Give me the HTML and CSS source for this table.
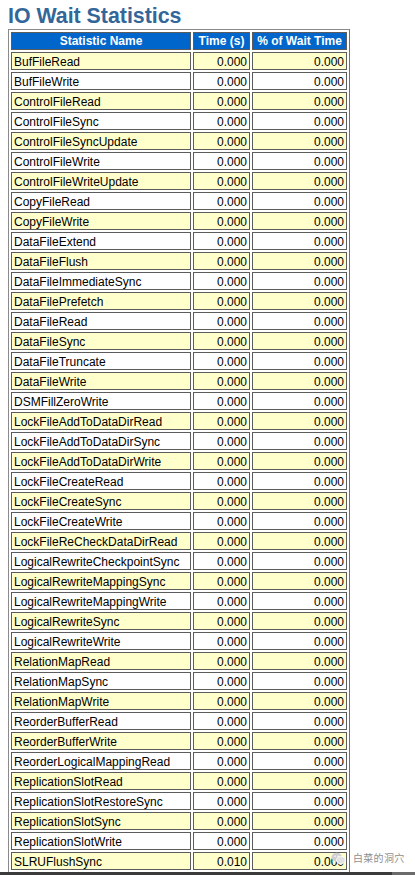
FILE: index.html
```html
<!DOCTYPE html>
<html>
<head>
<meta charset="utf-8">
<link rel="stylesheet" href="styles.css">
</head>
<body>
<h3 class="title">IO Wait Statistics</h3>
<table class="awr">
<colgroup><col class="c1"><col class="c2"><col class="c3"></colgroup>
<tr><th>Statistic Name</th><th>Time (s)</th><th>% of Wait Time</th></tr>
<tr class="y"><td>BufFileRead</td><td class="n">0.000</td><td class="n">0.000</td></tr>
<tr><td>BufFileWrite</td><td class="n">0.000</td><td class="n">0.000</td></tr>
<tr class="y"><td>ControlFileRead</td><td class="n">0.000</td><td class="n">0.000</td></tr>
<tr><td>ControlFileSync</td><td class="n">0.000</td><td class="n">0.000</td></tr>
<tr class="y"><td>ControlFileSyncUpdate</td><td class="n">0.000</td><td class="n">0.000</td></tr>
<tr><td>ControlFileWrite</td><td class="n">0.000</td><td class="n">0.000</td></tr>
<tr class="y"><td>ControlFileWriteUpdate</td><td class="n">0.000</td><td class="n">0.000</td></tr>
<tr><td>CopyFileRead</td><td class="n">0.000</td><td class="n">0.000</td></tr>
<tr class="y"><td>CopyFileWrite</td><td class="n">0.000</td><td class="n">0.000</td></tr>
<tr><td>DataFileExtend</td><td class="n">0.000</td><td class="n">0.000</td></tr>
<tr class="y"><td>DataFileFlush</td><td class="n">0.000</td><td class="n">0.000</td></tr>
<tr><td>DataFileImmediateSync</td><td class="n">0.000</td><td class="n">0.000</td></tr>
<tr class="y"><td>DataFilePrefetch</td><td class="n">0.000</td><td class="n">0.000</td></tr>
<tr><td>DataFileRead</td><td class="n">0.000</td><td class="n">0.000</td></tr>
<tr class="y"><td>DataFileSync</td><td class="n">0.000</td><td class="n">0.000</td></tr>
<tr><td>DataFileTruncate</td><td class="n">0.000</td><td class="n">0.000</td></tr>
<tr class="y"><td>DataFileWrite</td><td class="n">0.000</td><td class="n">0.000</td></tr>
<tr><td>DSMFillZeroWrite</td><td class="n">0.000</td><td class="n">0.000</td></tr>
<tr class="y"><td>LockFileAddToDataDirRead</td><td class="n">0.000</td><td class="n">0.000</td></tr>
<tr><td>LockFileAddToDataDirSync</td><td class="n">0.000</td><td class="n">0.000</td></tr>
<tr class="y"><td>LockFileAddToDataDirWrite</td><td class="n">0.000</td><td class="n">0.000</td></tr>
<tr><td>LockFileCreateRead</td><td class="n">0.000</td><td class="n">0.000</td></tr>
<tr class="y"><td>LockFileCreateSync</td><td class="n">0.000</td><td class="n">0.000</td></tr>
<tr><td>LockFileCreateWrite</td><td class="n">0.000</td><td class="n">0.000</td></tr>
<tr class="y"><td>LockFileReCheckDataDirRead</td><td class="n">0.000</td><td class="n">0.000</td></tr>
<tr><td>LogicalRewriteCheckpointSync</td><td class="n">0.000</td><td class="n">0.000</td></tr>
<tr class="y"><td>LogicalRewriteMappingSync</td><td class="n">0.000</td><td class="n">0.000</td></tr>
<tr><td>LogicalRewriteMappingWrite</td><td class="n">0.000</td><td class="n">0.000</td></tr>
<tr class="y"><td>LogicalRewriteSync</td><td class="n">0.000</td><td class="n">0.000</td></tr>
<tr><td>LogicalRewriteWrite</td><td class="n">0.000</td><td class="n">0.000</td></tr>
<tr class="y"><td>RelationMapRead</td><td class="n">0.000</td><td class="n">0.000</td></tr>
<tr><td>RelationMapSync</td><td class="n">0.000</td><td class="n">0.000</td></tr>
<tr class="y"><td>RelationMapWrite</td><td class="n">0.000</td><td class="n">0.000</td></tr>
<tr><td>ReorderBufferRead</td><td class="n">0.000</td><td class="n">0.000</td></tr>
<tr class="y"><td>ReorderBufferWrite</td><td class="n">0.000</td><td class="n">0.000</td></tr>
<tr><td>ReorderLogicalMappingRead</td><td class="n">0.000</td><td class="n">0.000</td></tr>
<tr class="y"><td>ReplicationSlotRead</td><td class="n">0.000</td><td class="n">0.000</td></tr>
<tr><td>ReplicationSlotRestoreSync</td><td class="n">0.000</td><td class="n">0.000</td></tr>
<tr class="y"><td>ReplicationSlotSync</td><td class="n">0.000</td><td class="n">0.000</td></tr>
<tr><td>ReplicationSlotWrite</td><td class="n">0.000</td><td class="n">0.000</td></tr>
<tr class="y"><td>SLRUFlushSync</td><td class="n">0.010</td><td class="n">0.000</td></tr>
</table>
<div class="watermark">
<svg class="wm-icon" width="15" height="13" viewBox="0 0 16 14"><ellipse cx="6" cy="5.5" rx="5.5" ry="4.6" fill="#cfcfcf"/><ellipse cx="10.5" cy="8.8" rx="4.6" ry="3.9" fill="#e2e2e2" stroke="#fff" stroke-width="0.8"/><circle cx="4.2" cy="4.5" r="0.8" fill="#fff"/><circle cx="7.8" cy="4.5" r="0.8" fill="#fff"/></svg>
<span class="wm-text">白菜的洞穴</span>
</div>
<div class="bottombar"><div class="bb-dark"></div><div class="bb-light"></div></div>
</body>
</html>
```
FILE: styles.css
```css
html, body {
  overflow: hidden;
}
body {
  margin: 0;
  background: #ffffff;
  font-family: "Liberation Sans", Arial, sans-serif;
}
.title {
  margin: 4px 0 1px 8px;
  font-size: 21.33px;
  line-height: 24px;
  font-weight: bold;
  color: #336699;
}
.awr {
  margin-left: 8px;
  border: 1px solid #8a8a8a;
  border-right-color: #707070;
  border-bottom-color: #707070;
  border-spacing: 2px;
  table-layout: fixed;
  width: 340px;
  font-size: 12px;
  line-height: 14px;
}
.c1 { width: 180px; }
.c2 { width: 57px; }
.c3 { width: 95px; }
.awr th {
  background: #0066cc;
  color: #ffffff;
  font-weight: bold;
  text-align: center;
  border: 1px solid #5c5c5c;
  padding: 1px 2px;
  white-space: nowrap;
}
.awr td {
  border: 1px solid #5c5c5c;
  padding: 2px 2px 0;
  color: #000000;
  background: #ffffff;
  white-space: nowrap;
  overflow: hidden;
}
.awr tr.y td {
  background: #ffffcc;
}
.awr td.n {
  text-align: right;
}
.watermark {
  position: absolute;
  left: 331px;
  top: 851px;
  display: flex;
  align-items: center;
  gap: 7px;
  white-space: nowrap;
}
.wm-text {
  font-family: "Noto Sans CJK SC", sans-serif;
  font-size: 10px;
  line-height: 14px;
  color: #8f8f8f;
  letter-spacing: 0.3px;
  text-shadow: 0 0 2px #fff, 0 0 2px #fff;
}
.bottombar {
  position: fixed;
  left: 0;
  right: 0;
  bottom: 0;
  height: 3px;
  display: flex;
}
.bb-dark {
  flex: 1;
  background: #3b3b3b;
}
.bb-light {
  width: 23px;
  background: #6b6b6b;
}
```
